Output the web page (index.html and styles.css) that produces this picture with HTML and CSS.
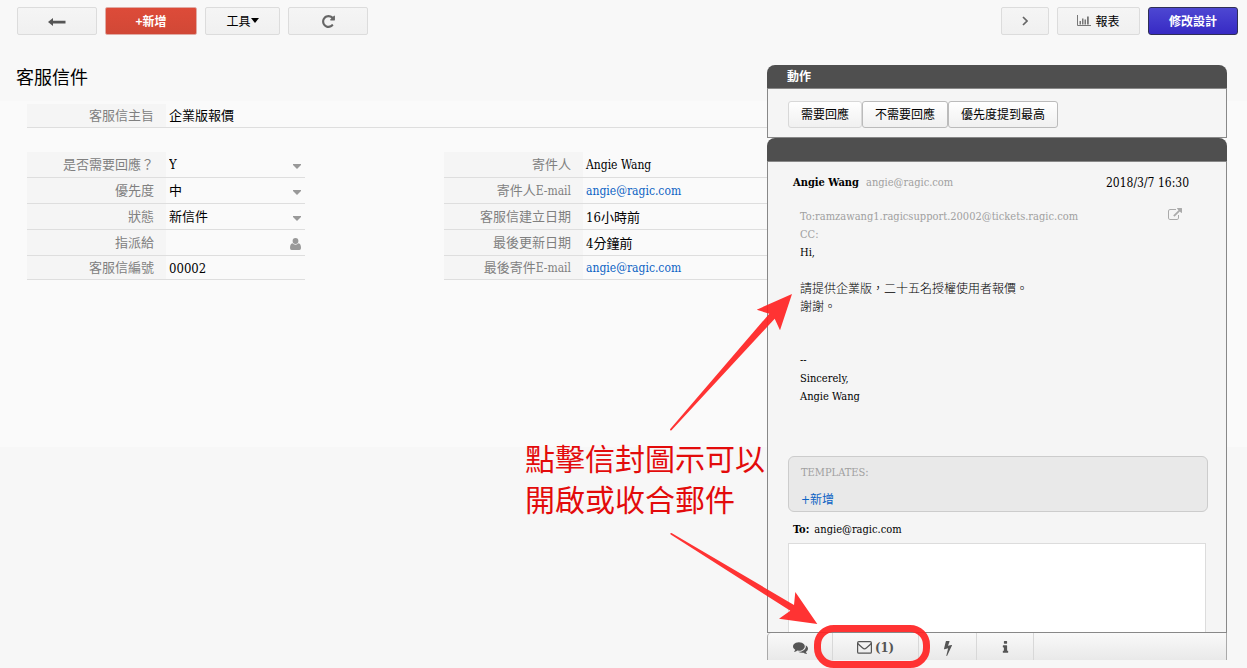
FILE: index.html
```html
<!DOCTYPE html>
<html lang="zh-Hant">
<head>
<meta charset="utf-8">
<meta name="viewport" content="width=device-width, initial-scale=1">
<title>客服信件</title>
<link rel="stylesheet" href="styles.css">
</head>
<body>
<div class="page">
  <header class="toolbar">
    <button class="btn btn-wide" type="button" aria-label="Back">
      <svg width="18" height="12" viewBox="0 0 18 12"><path d="M0 7l5-4v2.700h12.500v2.700H5V11z" fill="#555"/></svg>
    </button>
    <button class="btn btn-text btn-new" type="button">+新增</button>
    <button class="btn btn-text btn-tools" type="button">工具<svg width="8" height="5" viewBox="0 0 8 5"><path d="M0 0h8L4 5z" fill="#000"/></svg></button>
    <button class="btn btn-wide" type="button" aria-label="Reload">
      <svg width="15" height="15" viewBox="0 0 1792 1792"><path fill="#666" d="M1664 256v448q0 26-19 45t-45 19h-448q-42 0-59-40-17-39 14-69l138-138q-148-137-349-137-104 0-198.500 40.500t-163.500 109.500-109.500 163.500-40.500 198.500 40.500 198.500 109.500 163.500 163.500 109.500 198.500 40.500q119 0 225-52t179-147q7-10 23-12 15 0 25 9l137 138q9 8 9.500 20.500t-7.500 22.500q-109 132-264 204.500t-327 72.500q-156 0-298-61t-245-164-164-245-61-298 61-298 164-245 245-164 298-61q147 0 284.500 55.500t244.500 156.500l130-129q29-31 70-14 39 17 39 59z"/></svg>
    </button>
    <span class="spacer"></span>
    <button class="btn btn-next" type="button" aria-label="Next">
      <svg width="6" height="10" viewBox="0 0 6 10"><path d="M1 1l4 4-4 4" fill="none" stroke="#666" stroke-width="1.700"/></svg>
    </button>
    <button class="btn btn-text btn-report" type="button">
      <svg width="14" height="11" viewBox="0 0 14 11"><path d="M.5 0v10.500H14" fill="none" stroke="#777"/><path d="M2.500 6h1.500v3.500H2.500zM5 3.500h1.500v6H5zM7.500 4.500H9v5H7.500zM10 1.500h1.800v8H10z" fill="#777"/></svg>
      <span>報表</span>
    </button>
    <button class="btn btn-text btn-design" type="button">修改設計</button>
  </header>

  <main class="workspace">
    <section class="record">
      <h1 class="title">客服信件</h1>
      <form class="form">
        <div class="row row-subject">
          <span class="label">客服信主旨</span><span class="value">企業版報價</span>
        </div>
        <div class="columns">
          <div class="fields">
            <div class="row">
              <label class="label" for="reply">是否需要回應？</label>
              <span class="value"><select class="control" id="reply"><option>Y</option></select><svg class="caret" width="8" height="5" viewBox="0 0 8 5"><path d="M0 0h8v1L4 5 0 1z"/></svg></span>
            </div>
            <div class="row">
              <label class="label" for="priority">優先度</label>
              <span class="value"><select class="control" id="priority"><option>中</option></select><svg class="caret" width="8" height="5" viewBox="0 0 8 5"><path d="M0 0h8v1L4 5 0 1z"/></svg></span>
            </div>
            <div class="row">
              <label class="label" for="status">狀態</label>
              <span class="value"><select class="control" id="status"><option>新信件</option></select><svg class="caret" width="8" height="5" viewBox="0 0 8 5"><path d="M0 0h8v1L4 5 0 1z"/></svg></span>
            </div>
            <div class="row">
              <label class="label" for="assignee">指派給</label>
              <span class="value"><input class="control" id="assignee" type="text"><svg class="caret" width="11" height="12" viewBox="0 0 11 12"><circle cx="5.500" cy="3" r="2.900"/><path d="M2.500 5.300a4 4 0 0 0 6 0C10.300 5.600 11 7.500 11 10q0 2-1.600 2H1.600Q0 12 0 10c0-2.500.7-4.400 2.500-4.700z"/></svg></span>
            </div>
            <div class="row">
              <span class="label">客服信編號</span><span class="value value-low">00002</span>
            </div>
          </div>
          <div class="fields">
            <div class="row"><span class="label">寄件人</span><span class="value value-low latin">Angie Wang</span></div>
            <div class="row"><span class="label">寄件人<span class="latin">E-mail</span></span><span class="value value-low latin"><a class="link" href="#">angie@ragic.com</a></span></div>
            <div class="row"><span class="label">客服信建立日期</span><span class="value value-low">16小時前</span></div>
            <div class="row"><span class="label">最後更新日期</span><span class="value value-low">4分鐘前</span></div>
            <div class="row"><span class="label">最後寄件<span class="latin">E-mail</span></span><span class="value value-low latin"><a class="link" href="#">angie@ragic.com</a></span></div>
          </div>
        </div>
      </form>
    </section>

    <aside class="side">
      <section class="panel">
        <h2 class="panel-head">動作</h2>
        <div class="actions">
          <button class="action action-soft" type="button">需要回應</button>
          <button class="action" type="button">不需要回應</button>
          <button class="action" type="button">優先度提到最高</button>
        </div>
      </section>
      <section class="panel panel-mail">
        <div class="panel-head"></div>
        <div class="mail">
          <div class="mail-head">
            <b>Angie Wang</b><span class="muted">angie@ragic.com</span><time class="time">2018/3/7 16:30</time>
          </div>
          <div class="mail-meta">
            <div>
              <p class="line muted">To:ramzawang1.ragicsupport.20002@tickets.ragic.com</p>
              <p class="line muted">CC:</p>
            </div>
            <a class="open" href="#" aria-label="Open"><svg width="14" height="14" viewBox="0 0 1792 1792"><path fill="#aaa" d="M1408 928v320q0 119-84.500 203.500t-203.500 84.500h-832q-119 0-203.500-84.500t-84.500-203.500v-832q0-119 84.500-203.500t203.500-84.500h704q14 0 23 9t9 23v64q0 14-9 23t-23 9h-704q-66 0-113 47t-47 113v832q0 66 47 113t113 47h832q66 0 113-47t47-113v-320q0-14 9-23t23-9h64q14 0 23 9t9 23zm384-864v512q0 26-19 45t-45 19-45-19l-176-176-652 652q-10 10-23 10t-23-10l-114-114q-10-10-10-23t10-23l652-652-176-176q-19-19-19-45t19-45 45-19h512q26 0 45 19t19 45z"/></svg></a>
          </div>
          <div class="mail-body">
            <p class="line">Hi,</p>
            <br>
            <p class="line cjk">請提供企業版，二十五名授權使用者報價。</p>
            <p class="line cjk">謝謝。</p>
            <br><br>
            <p class="line">--</p>
            <p class="line">Sincerely,</p>
            <p class="line">Angie Wang</p>
          </div>
          <div class="templates">
            <div class="muted">TEMPLATES:</div>
            <a class="link" href="#">+新增</a>
          </div>
          <label class="to" for="message"><b>To:</b><span>angie@ragic.com</span></label>
          <textarea class="message" id="message"></textarea>
        </div>
      </section>
      <nav class="tabs">
        <button class="tab tab-chat" type="button" aria-label="Comments"><svg width="15" height="15" viewBox="0 0 1792 1792"><path d="M1408 768q0 139-94 257t-256.500 186.500-353.500 68.500q-86 0-176-16-124 88-278 128-36 9-86 16h-3q-11 0-20.500-8t-11.500-21q-1-3-1-6.500t.5-6.500 2-6l2.500-5 3.500-5.500 4-5 4.500-5 4-4.500q5-6 23-25t26-29.500 22.500-29 25-38.500 20.500-44q-124-72-195-177t-71-224q0-139 94-257t256.500-186.500 353.500-68.500 353.500 68.500 256.500 186.500 94 257zm384 256q0 120-71 224.500t-195 176.500q10 24 20.500 44t25 38.500 22.500 29 26 29.500 23 25q1 1 4 4.500t4.500 5 4 5 3.500 5.500l2.500 5 2 6 .5 6.500-1 6.500q-3 14-13 22t-22 7q-50-7-86-16-154-40-278-128-90 16-176 16-271 0-472-132 58 4 88 4 161 0 309-45t264-129q125-92 192-212t67-254q0-77-23-152 129 71 204 178t75 230z"/></svg></button>
        <button class="tab tab-mail" type="button"><svg width="15" height="13" viewBox="0 0 15 13"><rect x=".6" y=".6" width="13.800" height="11.600" rx="1.300" fill="none" stroke="#555" stroke-width="1.200"/><path d="M.8 2.500C2.500 4.500 4 5.500 5.700 7c1.300 1.100 2.300 1.100 3.600 0C11 5.500 12.500 4.500 14.200 2.500" fill="none" stroke="#555" stroke-width="1.200"/></svg><span>(1)</span></button>
        <button class="tab tab-bolt" type="button" aria-label="Actions"><svg width="16" height="16" viewBox="0 0 1792 1792"><path d="M1333 566q18 20 7 44l-540 1157q-13 25-42 25-4 0-14-2-17-5-25.500-19t-4.500-30l197-808-406 101q-4 1-12 1-18 0-31-11-18-15-13-39l201-825q4-16 16-26t28-10h328q19 0 32 12.500t13 29.500q0 8-5 18l-171 463 396-98q8-2 12-2 19 0 34 15z"/></svg></button>
        <button class="tab tab-info" type="button" aria-label="Info"><svg width="15" height="15" viewBox="0 0 1792 1792"><path d="M1216 1344v128q0 26-19 45t-45 19h-512q-26 0-45-19t-19-45v-128q0-26 19-45t45-19h64v-384h-64q-26 0-45-19t-19-45v-128q0-26 19-45t45-19h384q26 0 45 19t19 45v576h64q26 0 45 19t19 45zm-128-1152v192q0 26-19 45t-45 19h-256q-26 0-45-19t-19-45v-192q0-26 19-45t45-19h256q26 0 45 19t19 45z"/></svg></button>
        <span class="ring"></span>
      </nav>
      <svg class="arrow arrow-up" width="123" height="137" viewBox="670 294 123 137"><path d="M792 294L756.700 309.700 769.300 313.700 670 429.300Q670 431 671.500 430.300L774.700 318.700 780 330.300z"/></svg>
      <svg class="arrow arrow-down" width="148" height="92" viewBox="670 532 148 92"><path d="M817.300 624L795.300 592 794 605 671.500 533Q669.500 533 670.700 534.500L790.300 610.700 779 618.700z"/></svg>
      <p class="note">點擊信封圖示可以<br>開啟或收合郵件</p>
    </aside>
  </main>
</div>
</body>
</html>
```
FILE: styles.css
```css
* {
  box-sizing: border-box;
}

body {
  margin: 0;
  color: #000;
  background: #f7f7f7;
  font-family: "DejaVu Serif Condensed", "Noto Sans CJK TC", serif;
  font-size: 12px;
}

button,
select,
input,
textarea {
  font: inherit;
  color: inherit;
}

h1,
h2,
p {
  margin: 0;
}

.page {
  display: flex;
  flex-direction: column;
  height: 100vh;
  min-height: 600px;
  background: linear-gradient(#f8f8f8 101px, #fafafa 101px, #fafafa 447px, #f7f7f7 447px);
  overflow: hidden;
}

.toolbar {
  display: flex;
  gap: 8px;
  padding: 7px 9px 0 17px;
}

.spacer {
  flex: 1;
}

.btn {
  display: flex;
  align-items: center;
  justify-content: center;
  height: 28px;
  padding: 0;
  border: 1px solid #dcdcdc;
  border-radius: 2px;
  background: linear-gradient(#f5f5f5, #f0f0f0);
  font-family: "Noto Sans CJK TC", sans-serif;
}

.btn-text {
  padding-bottom: 2px;
}

.btn-wide {
  width: 80px;
}

.btn-new {
  width: 92px;
  border-color: #e0aba5;
  background: linear-gradient(#dd4b39, #d14836);
  color: #fff;
  font-weight: bold;
}

.btn-tools {
  width: 75px;
}

.btn-next {
  width: 48px;
}

.btn-report {
  gap: 4px;
  width: 83px;
}

.btn-design {
  width: 90px;
  border-color: #2f2f55;
  border-radius: 3px;
  background: linear-gradient(#4d47d2, #372ac4);
  color: #fff;
  font-weight: bold;
}

.workspace {
  flex: 1;
  display: grid;
  grid-template-columns: minmax(0, 1fr) 460px;
  min-height: 0;
  padding: 30px 20px 8px 0;
}

.title {
  padding-left: 16px;
  font-size: 18px;
  font-weight: normal;
  line-height: 26px;
}

.form {
  padding: 13px 0 0 27px;
  font-size: 13px;
}

.latin {
  font-size: 12px;
}

.columns {
  display: grid;
  grid-template-columns: 278px minmax(0, 1fr);
  gap: 139px;
  margin-top: 24px;
}

.row {
  display: flex;
  height: 26px;
  border-bottom: 1px solid #dedede;
  line-height: 25px;
}

.row-subject,
.fields .row:last-child {
  height: 24px;
  line-height: 23px;
}

.label {
  flex: none;
  width: 139px;
  padding-right: 12px;
  background: #f5f5f5;
  color: #808080;
  text-align: right;
}

.value {
  flex: 1;
  display: flex;
  align-items: center;
  min-width: 0;
  padding: 0 4px 0 3px;
}

.value-low {
  padding-top: 2px;
}

.control {
  flex: 1;
  min-width: 0;
  height: 25px;
  padding: 0;
  border: 0;
  outline: 0;
  background: transparent;
  appearance: none;
}

.caret {
  flex: none;
  margin-top: 3px;
  fill: #999;
}

.link {
  color: #0b62c4;
  text-decoration: none;
}

.side {
  position: relative;
  display: flex;
  flex-direction: column;
  min-height: 0;
}

.panel-head {
  height: 24px;
  padding-left: 20px;
  border-bottom: 1px solid #888;
  border-radius: 8px 8px 0 0;
  background: #4f4f4f;
  color: #fff;
  font-size: 12px;
  line-height: 25px;
}

.actions {
  display: flex;
  height: 49px;
  padding: 12px 20px;
  border: 1px solid #888;
  border-top: 0;
  background: #f5f5f5;
}

.action {
  height: 27px;
  padding: 0 12px 2px;
  border: 1px solid #bbb;
  border-radius: 3px;
  background: linear-gradient(#fff, #f0f0f0);
}

.action-soft {
  border-color: #d8d8d8;
}

.panel-mail {
  flex: 1;
  display: flex;
  flex-direction: column;
  min-height: 0;
}

.panel-mail .panel-head {
  flex: none;
}

.mail {
  flex: 1;
  display: flex;
  flex-direction: column;
  min-height: 0;
  padding: 12px 18px 0 20px;
  border: 1px solid #888;
  border-top: 0;
  background: #f5f5f5;
  font-size: 11px;
  overflow: hidden;
}

.muted {
  color: #a0a0a0;
}

.mail-head {
  display: flex;
  gap: 7px;
  padding: 0 19px 0 5px;
  line-height: 18px;
}

.time {
  margin-left: auto;
  font-size: 12px;
}

.mail-meta {
  display: flex;
  justify-content: space-between;
  padding: 16px 26px 0 12px;
}

.line {
  line-height: 18px;
}

.open {
  line-height: 0;
}

.mail-body {
  padding-left: 12px;
  line-height: 18px;
}

.cjk {
  font-size: 12px;
  font-weight: 300;
}

.templates {
  flex: none;
  height: 56px;
  margin-top: 50px;
  padding: 7px 12px;
  border: 1px solid #ccc;
  border-radius: 6px;
  background: #e9e9e9;
  line-height: 18px;
}

.templates .link {
  display: block;
  margin-top: 9px;
  font-size: 12px;
}

.to {
  display: flex;
  gap: 5px;
  padding: 9px 5px 4px;
  line-height: 18px;
}

.message {
  flex: none;
  width: 418px;
  height: 120px;
  border: 1px solid #dcdcdc;
  background: #fff;
  outline: 0;
  resize: none;
}

.tabs {
  position: relative;
  flex: none;
  display: flex;
  height: 27px;
  border: 1px solid #aaa;
  border-width: 0 1px;
  border-radius: 4px 0 0 0;
  background: linear-gradient(#f9f9f9, #e9e9e9);
}

.tab {
  display: flex;
  align-items: center;
  justify-content: center;
  gap: 3px;
  padding: 2px 0 0;
  border: 0;
  border-right: 1px solid #d8d8d8;
  background: transparent;
  color: #555;
  fill: #555;
  font-size: 13px;
  font-weight: bold;
}

.tab-chat {
  width: 65px;
}

.tab-mail {
  width: 86px;
}

.tab-bolt {
  width: 58px;
}

.tab-info {
  width: 57px;
}

.ring {
  position: absolute;
  top: -8px;
  left: 46px;
  width: 116px;
  height: 43px;
  border: 7px solid rgba(255, 34, 34, 0.92);
  border-radius: 20px;
}

.arrow {
  position: absolute;
  left: -97px;
  fill: rgba(255, 34, 34, 0.92);
}

.arrow-up {
  top: 229px;
}

.arrow-down {
  bottom: 36px;
}

.note {
  position: absolute;
  top: 372px;
  left: -242px;
  color: #e30b0b;
  font-family: "Noto Sans CJK TC", sans-serif;
  font-size: 30px;
  font-weight: 400;
  line-height: 41px;
  white-space: nowrap;
}
```
